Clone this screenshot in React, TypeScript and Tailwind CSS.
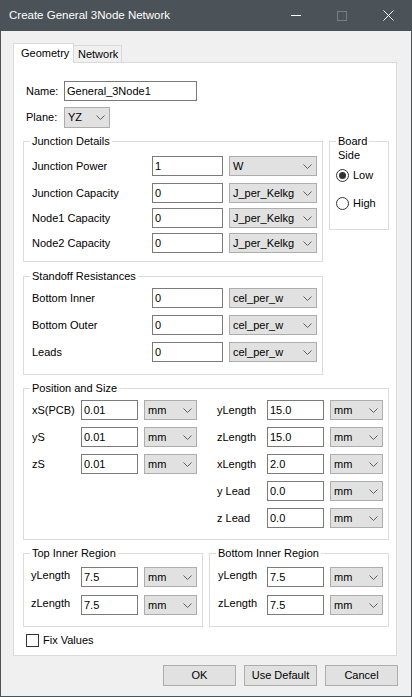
import React from "react";

type BoxProps = { value: string; className?: string };

const TextBox = ({ value, className = "" }: BoxProps) => (
  <div
    className={`h-[20px] shrink-0 border border-[#7a7a7a] bg-white pl-[2px] leading-[18px] ${className}`}
  >
    {value}
  </div>
);

const Combo = ({ value, className = "" }: BoxProps) => (
  <div
    className={`flex h-[20px] shrink-0 items-center justify-between border border-[#adadad] bg-[#e1e1e1] pl-[3px] pr-[4px] ${className}`}
  >
    <span>{value}</span>
    <svg width="9" height="5" viewBox="0 0 9 5" fill="none">
      <path d="M0.5 0.5L4.5 4.5L8.5 0.5" stroke="#5f5f5f" strokeWidth="1" />
    </svg>
  </div>
);

const Group = ({
  title,
  className = "",
  children,
}: {
  title: React.ReactNode;
  className?: string;
  children: React.ReactNode;
}) => (
  <div className={`border border-[#dcdcdc] ${className}`}>
    <div className="-mt-[8px] ml-[6px] w-fit bg-white px-[2px] leading-[14px]">{title}</div>
    {children}
  </div>
);

const Radio = ({ label, checked }: { label: string; checked?: boolean }) => (
  <div className="flex h-[13px] items-center gap-[4px]">
    <div className="flex h-[13px] w-[13px] items-center justify-center rounded-full border border-[#333333] bg-white">
      {checked && <div className="h-[7px] w-[7px] rounded-full bg-[#333333]" />}
    </div>
    <span>{label}</span>
  </div>
);

const junction = [
  { label: "Junction Power", value: "1", unit: "W" },
  { label: "Junction Capacity", value: "0", unit: "J_per_Kelkg" },
  { label: "Node1 Capacity", value: "0", unit: "J_per_Kelkg" },
  { label: "Node2 Capacity", value: "0", unit: "J_per_Kelkg" },
];

const standoff = [
  { label: "Bottom Inner", value: "0" },
  { label: "Bottom Outer", value: "0" },
  { label: "Leads", value: "0" },
];

const posLeft = [
  { label: "xS(PCB)", value: "0.01" },
  { label: "yS", value: "0.01" },
  { label: "zS", value: "0.01" },
];

const posRight = [
  { label: "yLength", value: "15.0" },
  { label: "zLength", value: "15.0" },
  { label: "xLength", value: "2.0" },
  { label: "y Lead", value: "0.0" },
  { label: "z Lead", value: "0.0" },
];

const inner = [
  { label: "yLength", value: "7.5" },
  { label: "zLength", value: "7.5" },
];

export default function App() {
  return (
    <div className="flex h-[697px] w-[412px] flex-col overflow-hidden border-x border-b border-[#4b5258] bg-[#f0f0f0] font-['Liberation_Sans',Arial,sans-serif] text-[11px] text-black">
      {/* title bar */}
      <div className="flex h-[31px] shrink-0 items-center bg-[#4b5258] pl-[8px] text-[11.5px] text-white">
        <span className="flex-1">Create General 3Node Network</span>
        <div className="flex h-full items-center">
          <div className="flex w-[46px] justify-center">
            <div className="h-px w-[10px] bg-white" />
          </div>
          <div className="flex w-[46px] justify-center">
            <div className="h-[10px] w-[10px] border border-[#787e83]" />
          </div>
          <div className="flex w-[46px] justify-center">
            <svg width="11" height="11" viewBox="0 0 11 11">
              <path d="M0.5 0.5L10.5 10.5M10.5 0.5L0.5 10.5" stroke="white" strokeWidth="1" />
            </svg>
          </div>
        </div>
      </div>

      <div className="flex flex-1 flex-col pl-[12px] pt-[12px]">
        {/* tabs */}
        <div className="relative z-10 -mb-px flex items-end">
          <div className="h-[20px] w-[61px] border-x border-t border-[#d9d9d9] bg-white pl-[7px] leading-[19px]">
            Geometry
          </div>
          <div className="h-[18px] w-[48px] border border-l-0 border-[#d9d9d9] bg-[#f0f0f0] pl-[4px] leading-[17px]">
            Network
          </div>
        </div>

        {/* tab panel */}
        <div className="w-[384px] border border-[#d9d9d9] bg-white pb-[8px] pl-[9px] pt-[18px]">
          <div className="flex h-[20px] items-center pl-[3px]">
            <span className="w-[38px]">Name:</span>
            <TextBox value="General_3Node1" className="w-[133px]" />
          </div>
          <div className="mt-[6px] flex h-[21px] items-center pl-[3px]">
            <span className="w-[38px]">Plane:</span>
            <Combo value="YZ" className="h-[21px] w-[46px]" />
          </div>

          <div className="mt-[13px] flex items-start gap-[6px]">
            <Group title="Junction Details" className="w-[300px] pb-[8px]">
              <div className="mt-[8px] flex flex-col gap-[5px]">
                {junction.map((r, i) => (
                  <div
                    key={r.label}
                    className={`flex h-[20px] items-center ${i === 1 ? "mt-[2px]" : ""}`}
                  >
                    <span className="w-[128px] pl-[8px]">{r.label}</span>
                    <TextBox value={r.value} className="w-[71px]" />
                    <Combo value={r.unit} className="ml-[6px] w-[88px]" />
                  </div>
                ))}
              </div>
            </Group>

            <Group
              title={
                <>
                  Board
                  <div className="-mb-[2px]">Side</div>
                </>
              }
              className="h-[89px] w-[60px]"
            >
              <div className="ml-[6px] mt-[9px] flex flex-col gap-[15px]">
                <Radio label="Low" checked />
                <Radio label="High" />
              </div>
            </Group>
          </div>

          <Group title="Standoff Resistances" className="mt-[14px] w-[300px] pb-[12px]">
            <div className="mt-[5px] flex flex-col gap-[7px]">
              {standoff.map((r) => (
                <div key={r.label} className="flex h-[20px] items-center">
                  <span className="w-[128px] pl-[8px]">{r.label}</span>
                  <TextBox value={r.value} className="w-[71px]" />
                  <Combo value="cel_per_w" className="ml-[6px] w-[88px]" />
                </div>
              ))}
            </div>
          </Group>

          <Group title="Position and Size" className="mt-[13px] w-[366px] pb-[11px]">
            <div className="mt-[5px] flex items-start">
              <div className="flex flex-col gap-[7px] pl-[8px]">
                {posLeft.map((r) => (
                  <div key={r.label} className="flex h-[20px] items-center">
                    <span className="w-[49px]">{r.label}</span>
                    <TextBox value={r.value} className="w-[57px]" />
                    <Combo value="mm" className="ml-[6px] w-[53px]" />
                  </div>
                ))}
              </div>
              <div className="ml-[20px] flex flex-col gap-[7px]">
                {posRight.map((r) => (
                  <div key={r.label} className="flex h-[20px] items-center">
                    <span className="w-[50px]">{r.label}</span>
                    <TextBox value={r.value} className="w-[57px]" />
                    <Combo value="mm" className="ml-[6px] w-[53px]" />
                  </div>
                ))}
              </div>
            </div>
          </Group>

          <div className="mt-[13px] flex gap-[6px]">
            {["Top Inner Region", "Bottom Inner Region"].map((t, i) => (
              <Group key={t} title={t} className="w-[180px] pb-[11px]">
                <div className={`mt-[7px] flex flex-col gap-[8px] ${i === 0 ? "pl-[7px]" : "pl-[8px]"}`}>
                  {inner.map((r) => (
                    <div key={r.label} className="flex h-[20px] items-center">
                      <span className={`pb-[4px] ${i === 0 ? "w-[50px]" : "w-[49px]"}`}>{r.label}</span>
                      <TextBox value={r.value} className="w-[57px]" />
                      <Combo value="mm" className="ml-[6px] w-[53px]" />
                    </div>
                  ))}
                </div>
              </Group>
            ))}
          </div>

          <div className="mt-[7px] flex h-[13px] items-center gap-[4px] pl-[3px]">
            <div className="h-[13px] w-[13px] border border-[#333333] bg-white" />
            <span>Fix Values</span>
          </div>
        </div>

        {/* buttons */}
        <div className="mt-[9px] flex justify-end gap-[8px] pr-[13px]">
          {["OK", "Use Default", "Cancel"].map((b) => (
            <div
              key={b}
              className="flex h-[21px] w-[73px] items-center justify-center border border-[#adadad] bg-[#e1e1e1]"
            >
              {b}
            </div>
          ))}
        </div>
      </div>
    </div>
  );
}
